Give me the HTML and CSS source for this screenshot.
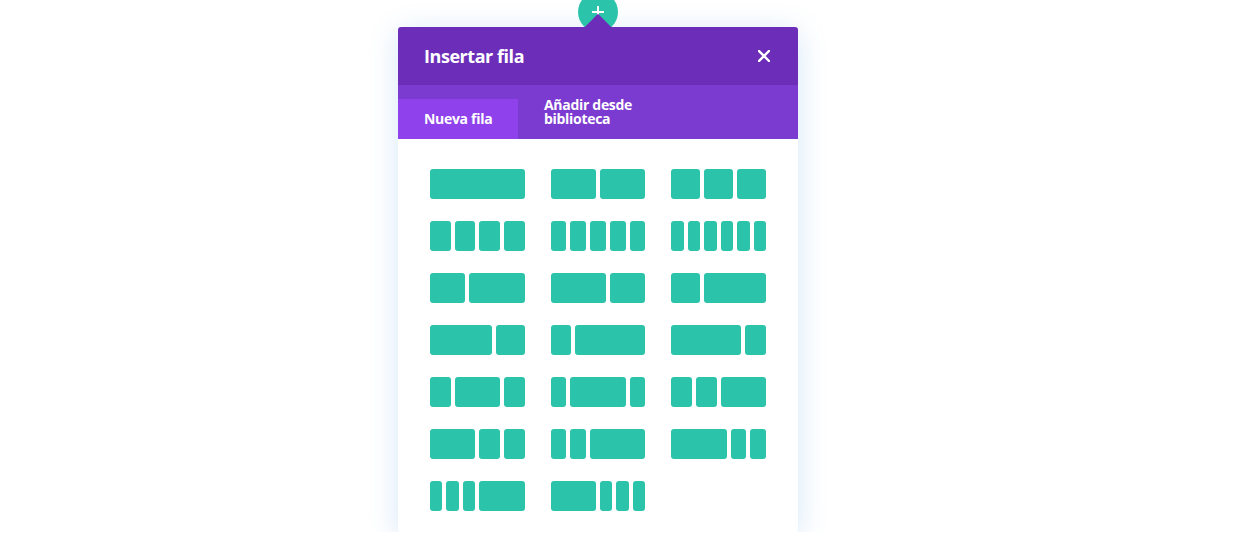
FILE: index.html
```html
<!DOCTYPE html>
<html lang="es">
<head>
	<meta charset="UTF-8">
	<meta name="viewport" content="width=device-width, initial-scale=1.0">
	<title>Insertar fila</title>
	<link rel="stylesheet" href="styles.css">
</head>
<body>
	<div class="stage">
		<div class="modal">
			<span class="add-btn">
				<svg width="12" height="12" viewBox="0 0 12 12"><path d="M6 0v12M0 6h12" stroke="#fff" stroke-width="2"/></svg>
			</span>

			<header class="modal-head">
				<h1>Insertar fila</h1>
				<button class="close" aria-label="Cerrar">
					<svg width="12" height="12" viewBox="0 0 12 12"><path d="M1 1l10 10M11 1L1 11" stroke="#fff" stroke-width="2.4" stroke-linecap="square"/></svg>
				</button>
			</header>

			<nav class="tabs">
				<a class="tab active">Nueva fila</a>
				<a class="tab">Añadir desde biblioteca</a>
			</nav>

			<div class="layouts">
				<div class="layout c1"><i></i></div>
				<div class="layout c2"><i></i><i></i></div>
				<div class="layout c3"><i></i><i></i><i></i></div>

				<div class="layout c4"><i></i><i></i><i></i><i></i></div>
				<div class="layout c5"><i></i><i></i><i></i><i></i><i></i></div>
				<div class="layout c6"><i></i><i></i><i></i><i></i><i></i><i></i></div>

				<div class="layout c5"><i class="s2"></i><i class="s3"></i></div>
				<div class="layout c5"><i class="s3"></i><i class="s2"></i></div>
				<div class="layout c3"><i></i><i class="s2"></i></div>

				<div class="layout c3"><i class="s2"></i><i></i></div>
				<div class="layout c4"><i></i><i class="s3"></i></div>
				<div class="layout c4"><i class="s3"></i><i></i></div>

				<div class="layout c4"><i></i><i class="s2"></i><i></i></div>
				<div class="layout c5"><i></i><i class="s3"></i><i></i></div>
				<div class="layout c4"><i></i><i></i><i class="s2"></i></div>

				<div class="layout c4"><i class="s2"></i><i></i><i></i></div>
				<div class="layout c5"><i></i><i></i><i class="s3"></i></div>
				<div class="layout c5"><i class="s3"></i><i></i><i></i></div>

				<div class="layout c6"><i></i><i></i><i></i><i class="s3"></i></div>
				<div class="layout c6"><i class="s3"></i><i></i><i></i><i></i></div>
			</div>
		</div>
	</div>
</body>
</html>
```

FILE: styles.css
```css
body {
  margin: 0;
  background: #ffffff;
  font-family: "Open Sans", "Noto Sans", sans-serif;
}

.stage {
  padding: 27px 0 0 398px;
}

.modal {
  position: relative;
  isolation: isolate;
  width: 400px;
  background: #ffffff;
  border-radius: 3px;
  box-shadow: 0 5px 30px rgba(43, 135, 218, 0.2);
}

.add-btn {
  position: absolute;
  z-index: -1;
  top: -35px;
  left: 180px;
  width: 40px;
  height: 40px;
  border-radius: 50%;
  background: #2bc4ab;
  display: flex;
  align-items: center;
  justify-content: center;
}

.modal-head {
  height: 58px;
  padding: 0 26px;
  display: flex;
  align-items: center;
  justify-content: space-between;
  background: #6c2eb9;
  color: #ffffff;
  border-radius: 3px 3px 0 0;
}

.modal-head::before {
  content: "";
  position: absolute;
  top: -9px;
  left: 190px;
  width: 20px;
  height: 20px;
  background: #6c2eb9;
  transform: rotate(45deg);
}

.modal-head h1 {
  position: relative;
  margin: 0;
  font-size: 18px;
  font-weight: 700;
  letter-spacing: -0.45px;
}

.close {
  border: 0;
  padding: 0;
  background: none;
  display: flex;
  margin-right: 2px;
}

.tabs {
  height: 54px;
  display: flex;
  align-items: flex-end;
  background: #7b3bd0;
}

.tab {
  box-sizing: border-box;
  padding: 0 26px;
  color: #ffffff;
  font-size: 14px;
  font-weight: 700;
  line-height: 14px;
  letter-spacing: -0.3px;
  display: flex;
  align-items: center;
}

.tab.active {
  width: 120px;
  height: 40px;
  padding-right: 0;
  white-space: nowrap;
  background: #8f42ec;
}

.tab:not(.active) {
  align-self: stretch;
  width: 150px;
}

.layouts {
  padding: 30px 32px 21px;
  display: grid;
  grid-template-columns: repeat(3, 1fr);
  column-gap: 26px;
  row-gap: 22px;
}

.layout {
  height: 30px;
  display: grid;
  gap: 4px;
}

.layout i {
  background: #2bc4ab;
  border-radius: 3px;
}

.c1 { grid-template-columns: 1fr; }
.c2 { grid-template-columns: repeat(2, 1fr); }
.c3 { grid-template-columns: repeat(3, 1fr); }
.c4 { grid-template-columns: repeat(4, 1fr); }
.c5 { grid-template-columns: repeat(5, 1fr); }
.c6 { grid-template-columns: repeat(6, 1fr); }

.s2 { grid-column: span 2; }
.s3 { grid-column: span 3; }
```
